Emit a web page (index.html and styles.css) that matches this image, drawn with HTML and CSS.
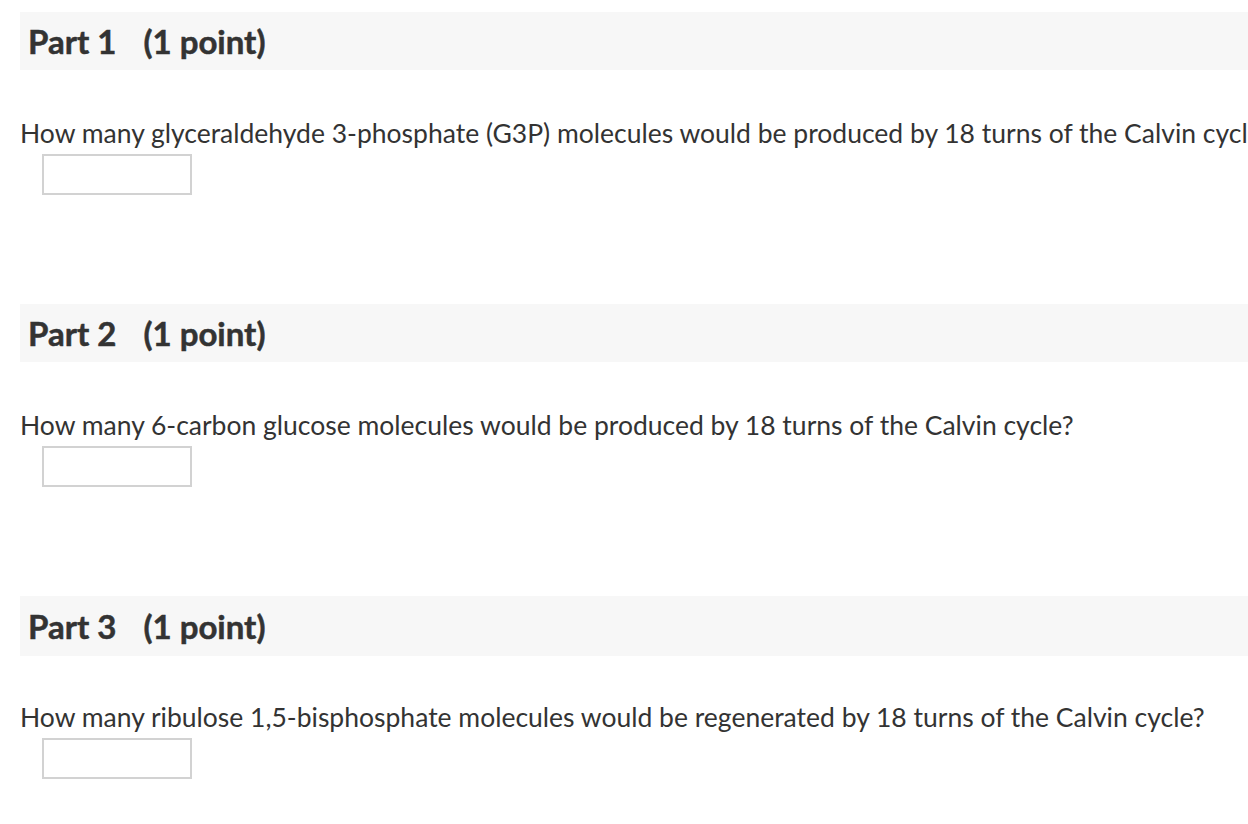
FILE: index.html
```html
<!DOCTYPE html>
<html>
<head>
<meta charset="utf-8">
<link rel="stylesheet" href="styles.css">
</head>
<body>
<div class="page">
  <section class="part">
    <h2 class="part-head"><span class="part-no">Part 1</span><span class="part-pts">(1 point)</span></h2>
    <p class="question">How many glyceraldehyde 3-phosphate (G3P) molecules would be produced by 18 turns of the Calvin cycle?</p>
    <input class="answer" type="text">
  </section>
  <section class="part">
    <h2 class="part-head"><span class="part-no">Part 2</span><span class="part-pts">(1 point)</span></h2>
    <p class="question">How many 6-carbon glucose molecules would be produced by 18 turns of the Calvin cycle?</p>
    <input class="answer" type="text">
  </section>
  <section class="part">
    <h2 class="part-head part-head-last"><span class="part-no">Part 3</span><span class="part-pts">(1 point)</span></h2>
    <p class="question">How many ribulose 1,5-bisphosphate molecules would be regenerated by 18 turns of the Calvin cycle?</p>
    <input class="answer" type="text">
  </section>
</div>
</body>
</html>
```
FILE: styles.css
```css
html, body {
  margin: 0;
  padding: 0;
  background: #ffffff;
  overflow: hidden;
}
body {
  font-family: Lato, "Liberation Sans", sans-serif;
  color: #333333;
}
.page {
  padding: 12px 0 0 20px;
}
.part {
  margin-bottom: 109px;
}
.part:last-child {
  margin-bottom: 0;
}
.part-head {
  margin: 0;
  height: 58px;
  line-height: 58px;
  padding-left: 8px;
  background: #f7f7f7;
  font-size: 33px;
  font-weight: 700;
  -webkit-text-stroke: 0.5px #333333;
  color: #333333;
  white-space: nowrap;
}
.part-head-last {
  height: 60px;
  line-height: 60px;
}
.part-pts {
  margin-left: 27px;
}
.question {
  margin: 48px 0 0 0;
  font-size: 26.5px;
  line-height: 30px;
  white-space: nowrap;
}
.part-head-last + .question {
  margin-top: 46px;
}
.answer {
  display: block;
  box-sizing: border-box;
  margin: 6px 0 0 22px;
  width: 150px;
  height: 41px;
  border: 2px solid #d2d2d2;
  background: #ffffff;
  padding: 0;
  outline: none;
}
```
